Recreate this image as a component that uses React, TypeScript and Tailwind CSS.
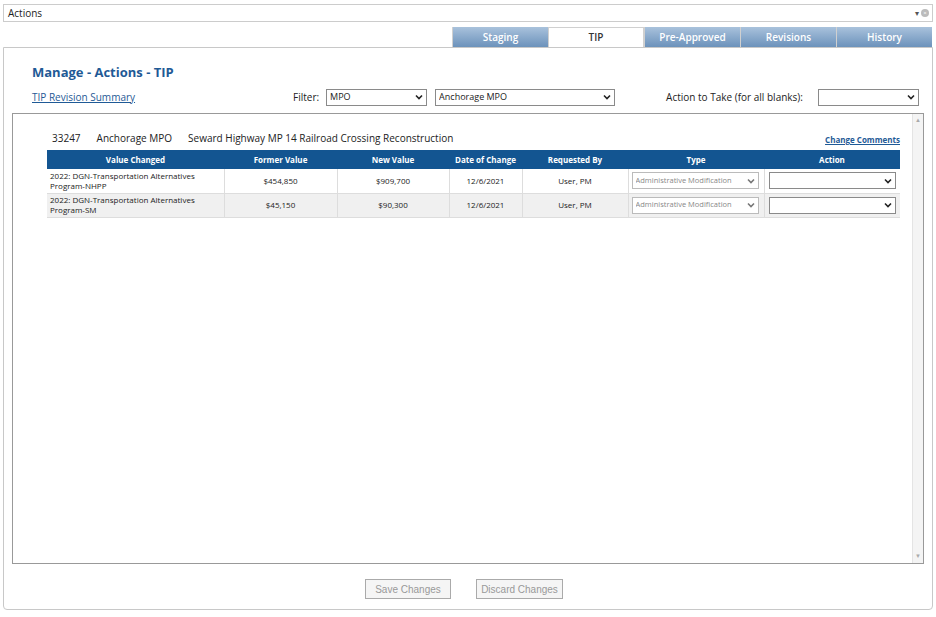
import React from "react";

const Chev = ({ c = "#333" }: { c?: string }) => (
  <svg width="8" height="6" viewBox="0 0 8 6" className="shrink-0"><path d="M1 1.5 L4 4.5 L7 1.5" stroke={c} strokeWidth="1.6" fill="none" /></svg>
);

const Sel = ({ w, text, gray }: { w: string; text?: string; gray?: boolean }) => (
  <div className={`${w} h-[17px] border bg-white flex items-center justify-between px-[3px] ${gray ? "text-[7.5px] text-[#888] border-[#bbb]" : "text-[9px] text-[#222] border-[#8a8a8a]"}`}>
    <span className="whitespace-nowrap overflow-hidden">{text}</span>
    <Chev c={gray ? "#777" : "#222"} />
  </div>
);

const rows = [
  { v1: "2022: DGN-Transportation Alternatives", v2: "Program-NHPP", f: "$454,850", n: "$909,700", bg: "bg-white" },
  { v1: "2022: DGN-Transportation Alternatives", v2: "Program-SM", f: "$45,150", n: "$90,300", bg: "bg-[#f0f0f0]" },
];

export default function App() {
  const font = { fontFamily: "'Open Sans', 'Liberation Sans', sans-serif" };
  return (
    <div className="w-[936px] h-[617px] bg-white relative text-[#222]" style={font}>
      <div className="pt-[4px] px-[3px]">
        <div className="h-[18px] border border-[#ccc] flex items-center justify-between pl-[4px] pr-[3px] text-[10px]">
          <span>Actions</span>
          <span className="flex items-center gap-[2px] text-[8px] text-[#555]">▾<span className="w-[8px] h-[8px] rounded-full bg-[#bbb] text-white text-[6px] leading-[8px] text-center">×</span></span>
        </div>
      </div>
      <div className="flex justify-end px-[4px] mt-[5px] h-[20px]">
        {["Staging", "TIP", "Pre-Approved", "Revisions", "History"].map((t) => (
          <div key={t} className={`w-[96px] h-[20px] flex items-center justify-center text-[10px] font-semibold border-l border-[#d0d0d0] ${t === "TIP" ? "bg-white text-[#333] border-t border-r border-[#bbb]" : "bg-gradient-to-b from-[#a9c2dc] to-[#6c92bb] text-white"}`}>{t}</div>
        ))}
      </div>
      <div className="mx-[3px] h-[563px] border border-[#c8c8c8] rounded-b-[4px] flex flex-col bg-white">
        <div className="pl-[28px] pt-[14px] text-[13px] font-bold text-[#1f5a96] leading-[20px]">Manage - Actions - TIP</div>
        <div className="flex items-center mt-[6px] h-[18px] text-[10px]">
          <a className="ml-[28px] text-[#1f5a96] underline w-[261px]">TIP Revision Summary</a>
          <span className="mr-[7px]">Filter:</span>
          <Sel w="w-[101px]" text="MPO" />
          <div className="w-[8px]" />
          <Sel w="w-[180px]" text="Anchorage MPO" />
          <span className="ml-[51px] mr-[15px]">Action to Take (for all blanks):</span>
          <Sel w="w-[101px]" />
        </div>
        <div className="mx-[8px] mt-[7px] h-[451px] border border-[#999] flex">
          <div className="flex-1 pl-[34px] pr-[10px]">
            <div className="flex items-end justify-between mt-[17px] mb-[4px] pr-[2px]">
              <div className="text-[10px] flex gap-[16px] pl-[5px]"><span>33247</span><span>Anchorage MPO</span><span>Seward Highway MP 14 Railroad Crossing Reconstruction</span></div>
              <a className="text-[8px] font-bold text-[#1f5a96] underline">Change Comments</a>
            </div>
            <table className="w-[853px] border-collapse text-[8px] table-fixed">
              <colgroup>
                <col className="w-[177px]" /><col className="w-[113px]" /><col className="w-[112px]" /><col className="w-[73px]" /><col className="w-[106px]" /><col className="w-[136px]" /><col className="w-[136px]" />
              </colgroup>
              <thead>
                <tr className="bg-[#135591] text-white h-[19px]">
                  {["Value Changed", "Former Value", "New Value", "Date of Change", "Requested By", "Type", "Action"].map((h) => (
                    <th key={h} className="font-bold">{h}</th>
                  ))}
                </tr>
              </thead>
              <tbody>
                {rows.map((r, i) => (
                  <tr key={i} className={`${r.bg} h-[24px] border-b border-[#ddd]`}>
                    <td className="px-[3px] leading-[10px] border-r border-[#ddd]">{r.v1}<br />{r.v2}</td>
                    <td className="text-center border-r border-[#ddd]">{r.f}</td>
                    <td className="text-center border-r border-[#ddd]">{r.n}</td>
                    <td className="text-center border-r border-[#ddd]">12/6/2021</td>
                    <td className="text-center border-r border-[#ddd]">User, PM</td>
                    <td className="px-[3px] border-r border-[#ddd]"><Sel w="w-[127px]" gray text="Administrative Modification" /></td>
                    <td className="px-[4px]"><Sel w="w-[127px]" /></td>
                  </tr>
                ))}
              </tbody>
            </table>
          </div>
          <div className="w-[11px] bg-[#f4f4f4] border-l border-[#e4e4e4] flex flex-col justify-between items-center text-[6px] text-[#aaa] py-[2px]">
            <span>▲</span><span>▼</span>
          </div>
        </div>
        <div className="flex justify-center gap-[25px] mt-[15px] pr-[8px]">
          <button className="w-[86px] h-[20px] border border-[#aaa] bg-[#f5f5f5] text-[10px] text-[#999]" style={{ fontFamily: "'Liberation Sans', sans-serif" }}>Save Changes</button>
          <button className="w-[87px] h-[20px] border border-[#aaa] bg-[#f5f5f5] text-[10px] text-[#999]" style={{ fontFamily: "'Liberation Sans', sans-serif" }}>Discard Changes</button>
        </div>
      </div>
    </div>
  );
}
